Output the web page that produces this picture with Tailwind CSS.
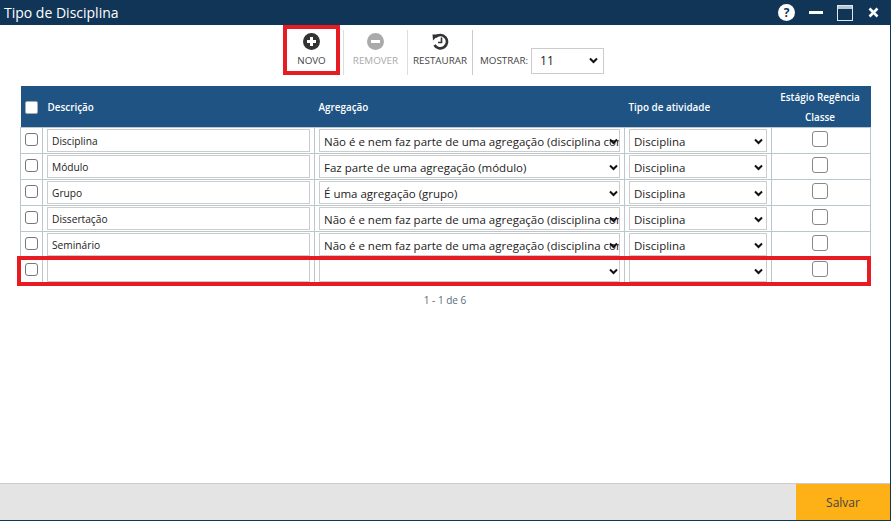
<!DOCTYPE html>
<html lang="pt">
<head>
<meta charset="utf-8">
<title>Tipo de Disciplina</title>
<script src="https://cdn.jsdelivr.net/npm/@tailwindcss/browser@4"></script>
</head>
<body class="bg-white">
<div class="relative w-[891px] h-[521px] flex flex-col overflow-hidden bg-white border-r border-b border-[#0f3557] font-['Open_Sans','Noto_Sans',sans-serif]">
  <header class="h-[25px] shrink-0 bg-[#103557] flex items-center justify-between pl-[4px]">
    <span class="text-white text-[14px]">Tipo de Disciplina</span>
    <div class="flex items-center">
      <span class="w-[17px] h-[17px] rounded-full bg-white text-[#103557] text-[12px] font-bold flex items-center justify-center mr-[14px]">?</span>
      <span class="w-[14px] h-[3px] bg-white mr-[14px]"></span>
      <span class="w-[16px] h-[16px] border border-[#dfe8f0] mr-[15px] bg-[#103557]"><span class="block h-[3px] bg-[#b9c6d2]"></span></span>
      <svg class="w-[11px] h-[11px] mr-[11px]" viewBox="0 0 11 11"><path d="M1.5 1.5l8 8M9.5 1.5l-8 8" stroke="#fff" stroke-width="2.6"/></svg>
    </div>
  </header>

  <div class="h-[51px] shrink-0 flex items-start pt-[5px] pl-[287px]">
    <div class="w-[49px] h-[45px] flex flex-col items-center pt-[3px] text-[9.8px] text-[#444]">
      <svg class="w-[17px] h-[17px]" viewBox="0 0 17 17"><circle cx="8.5" cy="8.5" r="8.5" fill="#333"/><path d="M8.5 4v9M4 8.5h9" stroke="#fff" stroke-width="3"/></svg>
      <span class="mt-[4px] leading-[14px]">NOVO</span>
    </div>
    <div class="w-px h-[45px] bg-[#ddd] ml-[7px]"></div>
    <div class="w-[63px] h-[45px] flex flex-col items-center pt-[3px] text-[9.8px] text-[#aaa]">
      <svg class="w-[17px] h-[17px]" viewBox="0 0 17 17"><circle cx="8.5" cy="8.5" r="8.5" fill="#aaa"/><path d="M4 8.5h9" stroke="#fff" stroke-width="3"/></svg>
      <span class="mt-[4px] leading-[14px]">REMOVER</span>
    </div>
    <div class="w-px h-[45px] bg-[#ddd]"></div>
    <div class="w-[64px] h-[45px] flex flex-col items-center pt-[3px] text-[9.8px] text-[#444]">
      <svg class="w-[17px] h-[17px]" viewBox="0 0 17 17"><path d="M3.5 4A6.7 6.7 0 1 1 2.5 12" fill="none" stroke="#333" stroke-width="2.6"/><path d="M0.5 1.5h6.5l-6 6z" fill="#333"/><path d="M9.5 4.5v5H6" fill="none" stroke="#333" stroke-width="1.6"/></svg>
      <span class="mt-[4px] leading-[14px]">RESTAURAR</span>
    </div>
    <div class="w-px h-[45px] bg-[#ccc]"></div>
    <span class="ml-[7px] text-[9.8px] leading-[14px] text-[#444] mt-[24px]">MOSTRAR:</span>
    <div class="relative ml-[3px] w-[73px] h-[26px] mt-[17px]">
      <select class="appearance-none w-full h-full border border-[#ccc] bg-white pl-[8px] text-[12px] text-[#222]"><option>11</option></select>
      <svg class="absolute right-[6px] top-[10px] w-[9px] h-[7px] pointer-events-none" viewBox="0 0 9 7"><path d="M1 1.5l3.5 3.5L8 1.5" fill="none" stroke="#111" stroke-width="2"/></svg>
    </div>
  </div>

  <main class="pl-[20px] pt-[10px] flex-1">
    <table class="table-fixed border-collapse w-[850px] text-[#222] text-[10.2px]">
      <colgroup><col class="w-[22px]"><col class="w-[272px]"><col class="w-[310px]"><col class="w-[147px]"><col class="w-[99px]"></colgroup>
      <thead>
        <tr class="h-[41px] bg-[#1e5384] text-white font-semibold text-[9.9px] text-left">
          <th class="font-semibold pl-[4px] pt-[1px]"><span class="block w-[13px] h-[13px] bg-white rounded-[2px] border border-[#aaa]"></span></th>
          <th class="font-semibold pl-[5px] pt-[1px]">Descrição</th>
          <th class="font-semibold pl-[4px] pt-[1px]">Agregação</th>
          <th class="font-semibold pl-[4px] pt-[1px]">Tipo de atividade</th>
          <th class="font-semibold pt-[1px] pr-[2px] text-center leading-[20px] whitespace-nowrap">Estágio Regência<br>Classe</th>
        </tr>
      </thead>
      <tbody>
        <tr class="h-[26px]">
          <td class="border border-[#b8c8cc] pl-[4px] align-top pt-[5px]"><input type="checkbox" class="appearance-none block w-[13px] h-[13px] rounded-[3px] border border-[#777] bg-white"></td>
          <td class="border border-[#b8c8cc] px-[4px]"><input value="Disciplina" class="block w-full h-[23px] border border-[#ccc] px-[4px] text-[10.2px] text-[#222]"></td>
          <td class="border border-[#b8c8cc] px-[4px]"><div class="relative h-[23px]"><select class="appearance-none w-full h-full border border-[#ccc] bg-white pl-[4px] pt-[3px] text-[11.5px] text-[#222]"><option>Não é e nem faz parte de uma agregação (disciplina comum)</option></select><svg class="absolute right-[2px] top-[9px] w-[9px] h-[7px] pointer-events-none" viewBox="0 0 9 7"><path d="M1 1.5l3.5 3.5L8 1.5" fill="none" stroke="#111" stroke-width="2"/></svg></div></td>
          <td class="border border-[#b8c8cc] px-[4px]"><div class="relative h-[23px]"><select class="appearance-none w-full h-full border border-[#ccc] bg-white pl-[4px] pt-[3px] text-[11.5px] text-[#222]"><option>Disciplina</option></select><svg class="absolute right-[4px] top-[9px] w-[9px] h-[7px] pointer-events-none" viewBox="0 0 9 7"><path d="M1 1.5l3.5 3.5L8 1.5" fill="none" stroke="#111" stroke-width="2"/></svg></div></td>
          <td class="border border-[#b8c8cc] align-top pt-[3px] pr-[2px]"><input type="checkbox" class="appearance-none block mx-auto w-[16px] h-[16px] rounded-[3px] border border-[#888] bg-white"></td>
        </tr>
        <tr class="h-[26px]">
          <td class="border border-[#b8c8cc] pl-[4px] align-top pt-[5px]"><input type="checkbox" class="appearance-none block w-[13px] h-[13px] rounded-[3px] border border-[#777] bg-white"></td>
          <td class="border border-[#b8c8cc] px-[4px]"><input value="Módulo" class="block w-full h-[23px] border border-[#ccc] px-[4px] text-[10.2px] text-[#222]"></td>
          <td class="border border-[#b8c8cc] px-[4px]"><div class="relative h-[23px]"><select class="appearance-none w-full h-full border border-[#ccc] bg-white pl-[4px] pt-[3px] text-[11.5px] text-[#222]"><option>Faz parte de uma agregação (módulo)</option></select><svg class="absolute right-[2px] top-[9px] w-[9px] h-[7px] pointer-events-none" viewBox="0 0 9 7"><path d="M1 1.5l3.5 3.5L8 1.5" fill="none" stroke="#111" stroke-width="2"/></svg></div></td>
          <td class="border border-[#b8c8cc] px-[4px]"><div class="relative h-[23px]"><select class="appearance-none w-full h-full border border-[#ccc] bg-white pl-[4px] pt-[3px] text-[11.5px] text-[#222]"><option>Disciplina</option></select><svg class="absolute right-[4px] top-[9px] w-[9px] h-[7px] pointer-events-none" viewBox="0 0 9 7"><path d="M1 1.5l3.5 3.5L8 1.5" fill="none" stroke="#111" stroke-width="2"/></svg></div></td>
          <td class="border border-[#b8c8cc] align-top pt-[3px] pr-[2px]"><input type="checkbox" class="appearance-none block mx-auto w-[16px] h-[16px] rounded-[3px] border border-[#888] bg-white"></td>
        </tr>
        <tr class="h-[26px]">
          <td class="border border-[#b8c8cc] pl-[4px] align-top pt-[5px]"><input type="checkbox" class="appearance-none block w-[13px] h-[13px] rounded-[3px] border border-[#777] bg-white"></td>
          <td class="border border-[#b8c8cc] px-[4px]"><input value="Grupo" class="block w-full h-[23px] border border-[#ccc] px-[4px] text-[10.2px] text-[#222]"></td>
          <td class="border border-[#b8c8cc] px-[4px]"><div class="relative h-[23px]"><select class="appearance-none w-full h-full border border-[#ccc] bg-white pl-[4px] pt-[3px] text-[11.5px] text-[#222]"><option>É uma agregação (grupo)</option></select><svg class="absolute right-[2px] top-[9px] w-[9px] h-[7px] pointer-events-none" viewBox="0 0 9 7"><path d="M1 1.5l3.5 3.5L8 1.5" fill="none" stroke="#111" stroke-width="2"/></svg></div></td>
          <td class="border border-[#b8c8cc] px-[4px]"><div class="relative h-[23px]"><select class="appearance-none w-full h-full border border-[#ccc] bg-white pl-[4px] pt-[3px] text-[11.5px] text-[#222]"><option>Disciplina</option></select><svg class="absolute right-[4px] top-[9px] w-[9px] h-[7px] pointer-events-none" viewBox="0 0 9 7"><path d="M1 1.5l3.5 3.5L8 1.5" fill="none" stroke="#111" stroke-width="2"/></svg></div></td>
          <td class="border border-[#b8c8cc] align-top pt-[3px] pr-[2px]"><input type="checkbox" class="appearance-none block mx-auto w-[16px] h-[16px] rounded-[3px] border border-[#888] bg-white"></td>
        </tr>
        <tr class="h-[26px]">
          <td class="border border-[#b8c8cc] pl-[4px] align-top pt-[5px]"><input type="checkbox" class="appearance-none block w-[13px] h-[13px] rounded-[3px] border border-[#777] bg-white"></td>
          <td class="border border-[#b8c8cc] px-[4px]"><input value="Dissertação" class="block w-full h-[23px] border border-[#ccc] px-[4px] text-[10.2px] text-[#222]"></td>
          <td class="border border-[#b8c8cc] px-[4px]"><div class="relative h-[23px]"><select class="appearance-none w-full h-full border border-[#ccc] bg-white pl-[4px] pt-[3px] text-[11.5px] text-[#222]"><option>Não é e nem faz parte de uma agregação (disciplina comum)</option></select><svg class="absolute right-[2px] top-[9px] w-[9px] h-[7px] pointer-events-none" viewBox="0 0 9 7"><path d="M1 1.5l3.5 3.5L8 1.5" fill="none" stroke="#111" stroke-width="2"/></svg></div></td>
          <td class="border border-[#b8c8cc] px-[4px]"><div class="relative h-[23px]"><select class="appearance-none w-full h-full border border-[#ccc] bg-white pl-[4px] pt-[3px] text-[11.5px] text-[#222]"><option>Disciplina</option></select><svg class="absolute right-[4px] top-[9px] w-[9px] h-[7px] pointer-events-none" viewBox="0 0 9 7"><path d="M1 1.5l3.5 3.5L8 1.5" fill="none" stroke="#111" stroke-width="2"/></svg></div></td>
          <td class="border border-[#b8c8cc] align-top pt-[3px] pr-[2px]"><input type="checkbox" class="appearance-none block mx-auto w-[16px] h-[16px] rounded-[3px] border border-[#888] bg-white"></td>
        </tr>
        <tr class="h-[26px]">
          <td class="border border-[#b8c8cc] pl-[4px] align-top pt-[5px]"><input type="checkbox" class="appearance-none block w-[13px] h-[13px] rounded-[3px] border border-[#777] bg-white"></td>
          <td class="border border-[#b8c8cc] px-[4px]"><input value="Seminário" class="block w-full h-[23px] border border-[#ccc] px-[4px] text-[10.2px] text-[#222]"></td>
          <td class="border border-[#b8c8cc] px-[4px]"><div class="relative h-[23px]"><select class="appearance-none w-full h-full border border-[#ccc] bg-white pl-[4px] pt-[3px] text-[11.5px] text-[#222]"><option>Não é e nem faz parte de uma agregação (disciplina comum)</option></select><svg class="absolute right-[2px] top-[9px] w-[9px] h-[7px] pointer-events-none" viewBox="0 0 9 7"><path d="M1 1.5l3.5 3.5L8 1.5" fill="none" stroke="#111" stroke-width="2"/></svg></div></td>
          <td class="border border-[#b8c8cc] px-[4px]"><div class="relative h-[23px]"><select class="appearance-none w-full h-full border border-[#ccc] bg-white pl-[4px] pt-[3px] text-[11.5px] text-[#222]"><option>Disciplina</option></select><svg class="absolute right-[4px] top-[9px] w-[9px] h-[7px] pointer-events-none" viewBox="0 0 9 7"><path d="M1 1.5l3.5 3.5L8 1.5" fill="none" stroke="#111" stroke-width="2"/></svg></div></td>
          <td class="border border-[#b8c8cc] align-top pt-[3px] pr-[2px]"><input type="checkbox" class="appearance-none block mx-auto w-[16px] h-[16px] rounded-[3px] border border-[#888] bg-white"></td>
        </tr>
        <tr class="h-[26px]">
          <td class="border border-[#b8c8cc] pl-[4px] align-top pt-[5px]"><input type="checkbox" class="appearance-none block w-[13px] h-[13px] rounded-[3px] border border-[#777] bg-white"></td>
          <td class="border border-[#b8c8cc] px-[4px]"><input class="block w-full h-[23px] border border-[#ccc] px-[4px] text-[10.2px] text-[#222]"></td>
          <td class="border border-[#b8c8cc] px-[4px]"><div class="relative h-[23px]"><select class="appearance-none w-full h-full border border-[#ccc] bg-white pl-[4px] pt-[3px] text-[11.5px] text-[#222]"><option></option></select><svg class="absolute right-[2px] top-[9px] w-[9px] h-[7px] pointer-events-none" viewBox="0 0 9 7"><path d="M1 1.5l3.5 3.5L8 1.5" fill="none" stroke="#111" stroke-width="2"/></svg></div></td>
          <td class="border border-[#b8c8cc] px-[4px]"><div class="relative h-[23px]"><select class="appearance-none w-full h-full border border-[#ccc] bg-white pl-[4px] pt-[3px] text-[11.5px] text-[#222]"><option></option></select><svg class="absolute right-[4px] top-[9px] w-[9px] h-[7px] pointer-events-none" viewBox="0 0 9 7"><path d="M1 1.5l3.5 3.5L8 1.5" fill="none" stroke="#111" stroke-width="2"/></svg></div></td>
          <td class="border border-[#b8c8cc] align-top pt-[3px] pr-[2px]"><input type="checkbox" class="appearance-none block mx-auto w-[16px] h-[16px] rounded-[3px] border border-[#888] bg-white"></td>
        </tr>
      </tbody>
    </table>
    <p class="w-[850px] text-center text-[10px] text-[#5a6b78] mt-[9px]">1 - 1 de 6</p>
  </main>

  <footer class="h-[37px] shrink-0 bg-[#e4e4e4] border-t border-[#ccc] flex justify-end">
    <button class="w-[94px] h-full bg-[#fdb116] text-[#444] text-[12px] pt-[1px]">Salvar</button>
  </footer>

  <div class="absolute left-[283px] top-[25px] w-[57px] h-[50px] border-[4px] border-[#e71c23] pointer-events-none"></div>
  <div class="absolute left-[17px] top-[256px] w-[854px] h-[30px] border-[4px] border-[#e71c23] pointer-events-none"></div>
</div>
</body>
</html>
